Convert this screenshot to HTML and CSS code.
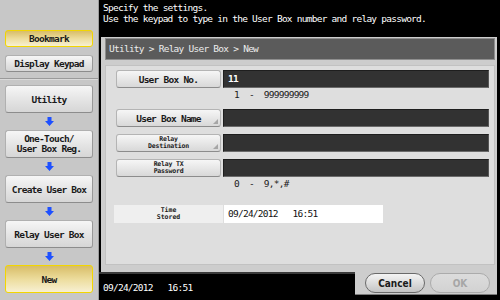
FILE: index.html
```html
<!DOCTYPE html>
<html lang="en">
<head>
  <meta charset="UTF-8" />
  <title>Relay User Box - New</title>
  <link rel="stylesheet" href="styles.css">
</head>
<body>
  <div class="screen">
    <aside class="sidebar">
      <div class="tools">
        <button class="side-btn small current">Bookmark</button>
        <button class="side-btn small">Display Keypad</button>
      </div>
      <nav class="path">
        <button class="side-btn">Utility</button>
        <span class="arrow"><svg width="9" height="9" viewBox="0 0 9 9"><path d="M2.5 0h4v4h2.5L4.5 9 0 4h2.5z" fill="#1e50ff"/></svg></span>
        <button class="side-btn two">One-Touch/<br>User Box Reg.</button>
        <span class="arrow"><svg width="9" height="9" viewBox="0 0 9 9"><path d="M2.5 0h4v4h2.5L4.5 9 0 4h2.5z" fill="#1e50ff"/></svg></span>
        <button class="side-btn">Create User Box</button>
        <span class="arrow"><svg width="9" height="9" viewBox="0 0 9 9"><path d="M2.5 0h4v4h2.5L4.5 9 0 4h2.5z" fill="#1e50ff"/></svg></span>
        <button class="side-btn">Relay User Box</button>
        <span class="arrow"><svg width="9" height="9" viewBox="0 0 9 9"><path d="M2.5 0h4v4h2.5L4.5 9 0 4h2.5z" fill="#1e50ff"/></svg></span>
        <button class="side-btn current">New</button>
      </nav>
    </aside>

    <main class="main">
      <div class="message">
        <p>Specify the settings.</p>
        <p>Use the keypad to type in the User Box number and relay password.</p>
      </div>

      <section class="panel">
        <div class="panel-title">Utility &gt; Relay User Box &gt; New</div>
        <div class="panel-body">
          <div class="row first">
            <button class="key">User Box No.</button>
            <div class="field">11</div>
          </div>
          <div class="hint">1  -  999999999</div>
          <div class="row">
            <button class="key input">User Box Name</button>
            <div class="field"></div>
          </div>
          <div class="row">
            <button class="key input tiny">Relay<br>Destination</button>
            <div class="field"></div>
          </div>
          <div class="row">
            <button class="key tiny">Relay TX<br>Password</button>
            <div class="field"></div>
          </div>
          <div class="hint">0  -  9,*,#</div>
          <div class="row stored">
            <div class="stored-label">Time<br>Stored</div>
            <div class="stored-value">09/24/2012   16:51</div>
          </div>
        </div>
      </section>

      <div class="status">
        <div class="clock">09/24/2012   16:51</div>
        <div class="tray">
          <button class="pill">Cancel</button>
          <button class="pill" disabled>OK</button>
        </div>
      </div>
    </main>
  </div>
</body>
</html>
```

FILE: styles.css
```css
body {
  margin: 0;
  padding: 0;
  background: #000;
  font-family: "DejaVu Sans Mono", "Liberation Mono", monospace;
}
button {
  font-family: inherit;
  padding: 0;
  cursor: pointer;
}
.screen {
  width: 500px;
  height: 300px;
  display: flex;
  overflow: hidden;
}

/* left column */
.sidebar {
  width: 98px;
  background: #c7c7c7;
  border-right: 1px solid #9c9c9c;
  display: flex;
  flex-direction: column;
}
.tools {
  padding: 30px 0 6px 5px;
  display: flex;
  flex-direction: column;
  gap: 8px;
  border-bottom: 1px solid #9a9a9a;
  box-shadow: 0 1px 0 #dadada;
}
.path {
  padding: 6px 0 0 5px;
  display: flex;
  flex-direction: column;
}
.side-btn {
  width: 88px;
  height: 28px;
  font-size: 9.5px;
  font-weight: bold;
  letter-spacing: -0.75px;
  color: #1a1a1a;
  background: linear-gradient(#f6f6f6, #e2e2e2 60%, #d6d6d6);
  border: 1px solid #b0b0b0;
  border-bottom-color: #8c8c8c;
  border-right-color: #989898;
  border-radius: 3px;
}
.side-btn.small {
  height: 17px;
}
.side-btn.two {
  line-height: 10px;
}
.side-btn.current {
  background: linear-gradient(#d8bd68, #ecdc9c 50%, #f7f0d2);
  border: 1px solid #f2d600;
}
.arrow {
  width: 88px;
  height: 17px;
  display: flex;
  justify-content: center;
  align-items: center;
}

/* right side */
.main {
  flex: 1;
  display: flex;
  flex-direction: column;
  background: #000;
}
.message {
  height: 37px;
  padding: 2px 0 0 4px;
  box-sizing: border-box;
  color: #fff;
  font-size: 9.5px;
  letter-spacing: -0.75px;
  line-height: 11px;
}
.message p {
  margin: 0;
}
.panel {
  height: 235px;
  margin: 0 3px 0 2px;
  padding: 1px 2px 7px 4px;
  box-sizing: border-box;
  background: #cdcdcd;
  display: flex;
  flex-direction: column;
}
.panel-title {
  height: 22px;
  box-sizing: border-box;
  background: #5b5b5b;
  border: 1px solid #8e8e8e;
  color: #ececec;
  font-size: 9.5px;
  letter-spacing: -0.75px;
  line-height: 20px;
  padding-left: 3px;
}
.panel-body {
  flex: 1;
  margin-top: 5px;
  background: #dedede;
  border: 1px solid #c2c2c2;
  padding: 4px 5px 0 10px;
  display: flex;
  flex-direction: column;
}
.row {
  height: 18px;
  display: flex;
  gap: 2px;
  margin-top: 7px;
}
.row.first {
  margin-top: 0;
}
.key {
  position: relative;
  width: 105px;
  font-size: 9.5px;
  font-weight: bold;
  letter-spacing: -0.75px;
  color: #1a1a1a;
  background: linear-gradient(#f6f6f6, #e4e4e4 60%, #d8d8d8);
  border: 1px solid #b4b4b4;
  border-bottom-color: #8c8c8c;
  border-radius: 3px;
}
.key.tiny {
  font-size: 6.5px;
  letter-spacing: -0.2px;
  line-height: 7px;
}
.key.input::after {
  content: "";
  position: absolute;
  right: 2px;
  bottom: 2px;
  border-style: solid;
  border-width: 0 0 5px 5px;
  border-color: transparent transparent #a6a6a6 transparent;
}
.field {
  flex: 1;
  background: #323232;
  border: 1px solid #1e1e1e;
  border-right-color: #555;
  border-bottom-color: #6a6a6a;
  color: #fff;
  font-size: 9.5px;
  font-weight: bold;
  letter-spacing: -0.75px;
  line-height: 16px;
  padding-left: 4px;
}
.hint {
  height: 14px;
  line-height: 14px;
  padding-left: 118px;
  font-size: 9.5px;
  letter-spacing: -0.75px;
  color: #1a1a1a;
  white-space: pre;
}
.row.stored {
  margin: 14px 0 0 -2px;
  gap: 1px;
}
.stored-label {
  width: 109px;
  background: #efefef;
  font-size: 6.5px;
  font-weight: bold;
  line-height: 7px;
  color: #1a1a1a;
  display: flex;
  align-items: center;
  justify-content: center;
  text-align: center;
}
.stored-value {
  width: 155px;
  background: #fff;
  font-size: 9.5px;
  letter-spacing: -0.75px;
  line-height: 18px;
  padding-left: 4px;
  color: #111;
  white-space: pre;
}

/* bottom strip */
.status {
  flex: 1;
  display: flex;
  justify-content: space-between;
  align-items: flex-start;
}
.clock {
  padding: 8px 0 0 4px;
  color: #fff;
  font-size: 9.5px;
  letter-spacing: -0.75px;
  white-space: pre;
  border-top: 2px solid #3a3a3a;
  flex: 1;
  align-self: stretch;
}
.tray {
  width: 142px;
  height: 23px;
  margin-right: 3px;
  box-sizing: border-box;
  padding: 1px 7px 0 10px;
  background: #cdcdcd;
  border-bottom: 1px solid #7a7a7a;
  display: flex;
  gap: 5px;
}
.pill {
  width: 60px;
  height: 20px;
  border-radius: 10px;
  border: 1px solid #6a6a6a;
  background: linear-gradient(#f4f4f4, #dadada 55%, #c4c4c4);
  font-family: "DejaVu Sans Condensed", "Liberation Sans", sans-serif;
  font-size: 10px;
  font-weight: bold;
  color: #1a1a1a;
}
.pill:disabled {
  border-color: #ababab;
  background: linear-gradient(#dcdcdc, #d2d2d2);
  color: #a6a6a6;
  cursor: default;
}
```
